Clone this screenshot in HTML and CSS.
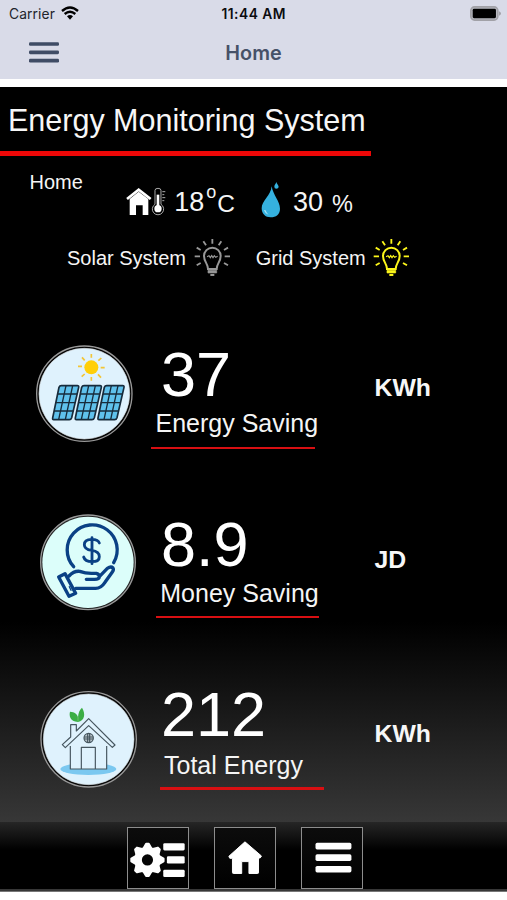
FILE: index.html
```html
<!DOCTYPE html>
<html lang="en">
<head>
<meta charset="utf-8">
<title>Home</title>
<link rel="stylesheet" href="styles.css">
</head>
<body>
<header class="top">
  <div class="status">
    <div class="carrier">
      <span>Carrier</span>
      <svg class="wifi" viewBox="0 0 54 42"><path d="M3 15Q27-6 51 15" fill="none" stroke="#000" stroke-width="7"/><path d="M11 24Q27 10 43 24" fill="none" stroke="#000" stroke-width="7"/><path d="M18 31Q27 23 36 31L27 41Z"/></svg>
    </div>
    <span class="time">11:44 AM</span>
    <svg class="battery" viewBox="0 0 92 44"><rect x="2.500" y="2.500" width="80" height="39" rx="11" fill="#b9bac2" stroke="#a1a1a7" stroke-width="5"/><rect x="8" y="8" width="69" height="28" rx="4"/><path d="M86 15Q92 18 92 22T86 29Z" fill="#a1a1a7"/></svg>
  </div>
  <div class="nav">
    <svg class="burger" viewBox="0 0 90 62"><g fill="#3f4c65"><rect width="90" height="11" rx="4"/><rect y="25" width="90" height="11" rx="4"/><rect y="50" width="90" height="11" rx="4"/></g></svg>
    <span class="nav-title">Home</span>
  </div>
</header>
<main class="screen">
  <h1 class="title">Energy Monitoring System</h1>
  <div class="title-rule"></div>
  <section class="climate">
    <span class="room">Home</span>
    <svg class="indoor" viewBox="377 290 120 88">
      <path d="M380 326L415 298L451 326" fill="none" stroke="#fff" stroke-width="8"/>
      <path d="M388 326L415 304L444 326V374H427V345H407V374H388Z" fill="#fff"/>
      <path d="M464 342V300Q464 294 473 294T482 300V342A17 17 0 1 1 464 342Z" fill="none" stroke="#aaa" stroke-width="3"/>
      <circle cx="473" cy="355" r="11" fill="#fff"/><path d="M473 355V313" stroke="#fff" stroke-width="8"/>
      <path d="M486 304H495M486 313H492M486 322H495M486 331H492" stroke="#aaa" stroke-width="3"/>
    </svg>
    <span class="reading temp">18</span><span class="degree">o</span><span class="celsius">C</span>
    <svg class="drop" viewBox="124 274 60 112"><path d="M156 290C160 316 181 335 181 357C181 374 169 383 153 383C137 383 126 373 126 356C126 334 153 319 156 290Z" fill="#35b1df"/><path d="M170 277C171 283 177 286 177 292Q176 297 170 297Q164 297 164 291C164 285 169 283 170 277Z" fill="#35b1df"/><path d="M133 361Q137 373 147 375Q141 370 137 361Z" fill="#a5e3f7"/></svg>
    <span class="reading hum">30</span><span class="percent">%</span>
  </section>
  <section class="sources">
    <span class="source solar">Solar System</span>
    <svg class="bulb off" viewBox="460 443 110 118"><use href="#bulb"/></svg>
    <span class="source grid">Grid System</span>
    <svg class="bulb on" viewBox="460 443 110 118">
      <g id="bulb" fill="none" stroke="currentColor" stroke-width="5.500">
        <path d="M502 536C502 520 490 515 490 497A25 25 0 0 1 540 497C540 515 528 520 528 536Z" stroke-width="6"/>
        <path d="M499 499L505 496L509 502L513 496L517 502L521 496L525 501L531 498" stroke-width="3.500"/>
        <path d="M502 540H528V548H502Z" fill="currentColor" stroke-width="2"/><path d="M509 554H521" stroke-width="6"/>
        <path d="M515 446V460M488 453L496 465M542 453L534 465M468 472L480 479M562 472L550 479M462 498H478M552 498H568M468 525L480 518M562 525L550 518"/>
      </g>
    </svg>
  </section>

  <section class="metric energy">
    <svg class="badge" viewBox="0 0 330 330">
      <circle cx="163" cy="161" r="143" fill="#050505" stroke="#999" stroke-width="4"/><circle cx="163" cy="161" r="136" fill="#dff2fd" stroke="#d6dce0" stroke-width="2"/>
      <circle cx="184" cy="82" r="21" fill="#ffcf08"/>
      <path d="M184 42V53M184 111V122M144 79H156M212 83H224M156 52L164 61M204 103L213 113M214 54L205 62M155 110L164 102" stroke="#f3c536" stroke-width="5"/>
      <defs><g id="panel"><path d="M94 137H142Q147 137 146 142L125 233Q123 239 118 239H71Q67 239 68 234L87 142Q89 137 94 137Z" fill="#5fc1ec" stroke="#172b3b" stroke-width="5"/><path d="M108 137L86 239M128 137L106 239M83 162H141M76 188H135M72 213H130" fill="none" stroke="#172b3b" stroke-width="4"/></g></defs>
      <use href="#panel"/><use href="#panel" x="68"/><use href="#panel" x="136"/>
    </svg>
    <div class="data"><div class="value">37</div><div class="label">Energy Saving</div><div class="rule"></div></div>
    <span class="unit">KWh</span>
  </section>

  <section class="metric money">
    <svg class="badge" viewBox="0 0 330 330">
      <circle cx="174" cy="163" r="142" fill="#222" stroke="#999" stroke-width="4"/><circle cx="174" cy="163" r="137" fill="#dcfefa"/>
      <g fill="none" stroke="#0a4185" stroke-width="10" stroke-linejoin="round" stroke-linecap="round">
        <path d="M131 176A75 75 0 1 1 251 164"/>
        <path d="M208 105Q205 94 185 94Q163 94 163 110Q163 124 185 127Q208 130 208 146Q208 161 186 161Q165 161 161 147M186 89V167" stroke-width="8.500"/>
        <path d="M86 207L105 197L137 256L117 265Z"/>
        <path d="M117 204Q132 188 149 190Q166 196 184 196H199Q209 199 208 207Q207 214 194 214H169M208 206L232 181Q243 174 249 180Q252 185 247 192L225 223Q213 241 197 241H137"/>
        <path d="M118 236L123 247" stroke-width="4"/>
      </g>
    </svg>
    <div class="data"><div class="value">8.9</div><div class="label">Money Saving</div><div class="rule"></div></div>
    <span class="unit">JD</span>
  </section>

  <section class="metric total">
    <svg class="badge" viewBox="0 0 330 330">
      <circle cx="176" cy="163" r="143" fill="#080808" stroke="#999" stroke-width="4"/><circle cx="176" cy="163" r="136" fill="#dff2fd" stroke="#cfd6da" stroke-width="2"/>
      <ellipse cx="175" cy="252" rx="84" ry="18" fill="#7bc8f0"/>
      <path d="M121 165L176 115L230 165V252H121Z" fill="#dff2fd"/>
      <g fill="none" stroke="#46565f" stroke-width="3.500" stroke-linejoin="round">
        <path d="M121 183V252H230V183M154 252V187H196V252"/>
        <path d="M97 179L122 156V119H139V138L176 101L255 180L247 187L176 122L106 188Z" fill="#dff2fd"/>
        <circle cx="176" cy="159" r="14" fill="#b8c5cb"/><path d="M173 145V173M179 145V173M162 156H190M162 162H190"/>
      </g>
      <path d="M144 111C119 109 117 91 120 80C134 81 142 87 144 97C145 83 149 74 156 68C167 86 165 106 144 111Z" fill="#3bae45"/><path d="M144 96V109" stroke="#83cf7c" stroke-width="2"/>
    </svg>
    <div class="data"><div class="value">212</div><div class="label">Total Energy</div><div class="rule"></div></div>
    <span class="unit">KWh</span>
  </section>

  <footer class="tabs">
    <button class="tab" aria-label="Settings"><svg viewBox="24 37 183 183">
      <g fill="#fff" stroke="#fff" stroke-width="6" stroke-linejoin="round"><defs><path id="tooth" d="M69 102L79 85H87L97 102Z"/></defs>
      <use href="#tooth"/><use href="#tooth" transform="rotate(45 83 134)"/><use href="#tooth" transform="rotate(90 83 134)"/><use href="#tooth" transform="rotate(135 83 134)"/><use href="#tooth" transform="rotate(180 83 134)"/><use href="#tooth" transform="rotate(225 83 134)"/><use href="#tooth" transform="rotate(270 83 134)"/><use href="#tooth" transform="rotate(315 83 134)"/></g>
      <circle cx="83" cy="134" r="28.500" fill="none" stroke="#fff" stroke-width="23"/>
      <g fill="#fff"><rect x="131" y="83" width="65" height="22" rx="4"/><rect x="142" y="123" width="54" height="22" rx="4"/><rect x="131" y="164" width="65" height="22" rx="4"/></g>
    </svg></button>
    <button class="tab" aria-label="Home"><svg viewBox="284 37 183 183"><path d="M375 79L425 122L421 128H416V173Q416 175 413 175H387V139H365V175H340Q337 175 337 172V129H329L326 123Z" fill="#fff" stroke="#fff" stroke-width="3" stroke-linejoin="round"/></svg></button>
    <button class="tab" aria-label="Menu"><svg viewBox="544 37 183 183"><g fill="#fff"><rect x="585" y="82" width="109" height="20" rx="5"/><rect x="585" y="117" width="109" height="20" rx="5"/><rect x="585" y="152" width="109" height="20" rx="5"/></g></svg></button>
  </footer>
</main>
</body>
</html>
```
FILE: styles.css
```css
* { box-sizing: border-box; }
body { margin: 0; background: #fff; width: 507px; height: 900px; overflow: hidden; font-family: "Liberation Sans", Arial, sans-serif; }
svg { display: block; flex: none; }
span { white-space: nowrap; }

.top { height: 79px; background: #d9dbe8; font-family: Inter, sans-serif; }
.status { height: 28px; display: grid; grid-template-columns: 1fr auto 1fr; align-items: center; padding: 0 6px 0 9px; font-size: 13.800px; color: #22242b; }
.carrier { display: flex; align-items: center; gap: 6px; margin-top: -1px; }
.carrier span { letter-spacing: 0.1px; }
.wifi { width: 18px; height: 14px; margin-top: -1px; }
.time { font-weight: 600; font-size: 13.8px; color: #0c0c10; letter-spacing: 0.5px; margin-left: -2.5px; }
.battery { width: 31px; height: 15px; justify-self: end; margin-top: -2px; }
.nav { height: 49px; display: grid; grid-template-columns: 1fr auto 1fr; align-items: center; padding: 0 29px; }
.burger { width: 30px; height: 21px; }
.nav-title { font-size: 19.800px; font-weight: 600; color: #465168; }

.screen { margin-top: 8px; height: 805px; padding-top: 15px; border-bottom: 1.5px solid #777; background: linear-gradient(#000 0, #000 535px, #373737 735px); }
.title { margin: 0; padding-left: 8px; font-size: 30.500px; line-height: 36px; font-weight: 400; color: #f7f7f7; }
.title-rule { width: 371px; height: 5px; margin-top: 12.5px; background: #ee0707; }

.climate { height: 64.5px; display: flex; align-items: flex-start; padding-left: 29.500px; color: #f5f5f5; }
.room { width: 96.200px; font-size: 20px; line-height: 24px; margin-top: 14.5px; }
.indoor { width: 40px; height: 29.300px; margin-top: 31.200px; }
.reading { font-size: 27px; line-height: 30px; margin-top: 31.800px; }
.temp { width: 33px; margin-left: 8.500px; }
.degree { width: 11px; font-size: 18px; line-height: 20px; margin-top: 26px; margin-left: -1px; }
.celsius { width: 44.300px; font-size: 24.500px; line-height: 28px; margin-top: 34.500px; }
.drop { width: 20px; height: 37.300px; margin-top: 25.800px; }
.hum { width: 39px; margin-left: 11.500px; }
.percent { font-size: 23.500px; line-height: 28px; margin-top: 34.500px; }

.sources { height: 120px; display: flex; align-items: flex-start; padding-left: 67px; color: #f5f5f5; }
.source { font-size: 20px; line-height: 24px; margin-top: 25.800px; }
.solar { width: 127px; }
.grid { width: 117.500px; margin-left: 25px; }
.bulb { width: 36.700px; height: 39.300px; margin-top: 17.700px; }
.off { color: #989898; }
.on { color: #fcf61a; }

.metric { display: flex; align-items: flex-start; padding-left: 30px; color: #fff; }
.badge { width: 110px; height: 110px; }
.data { width: 234.500px; padding-left: 10px; }
.value { font-size: 63px; line-height: 56px; padding-left: 11px; }
.label { font-size: 25px; line-height: 30px; color: #f5f5f5; }
.rule { width: 163.500px; height: 2.500px; background: #d80f12; }
.unit { font-size: 24.800px; line-height: 30px; font-weight: 700; color: #f7f7f7; }

.energy { height: 168px; }
.energy .data { padding-top: 5.500px; }
.energy .label { margin: 6.500px 0 8.500px 5.500px; }
.energy .rule { margin-left: 1px; }
.energy .unit { margin-top: 32.500px; }

.money { height: 177px; }
.money .data { padding-top: 8.200px; }
.money .label { margin: 5.800px 0 8px 10.300px; }
.money .rule { margin-left: 5.500px; }
.money .unit { margin-top: 37px; }

.total { height: 137px; }
.total .data { padding-top: 1.200px; }
.total .label { margin: 8.100px 0 6.700px 14px; }
.total .rule { margin-left: 10px; height: 3px; }
.total .unit { margin-top: 34.300px; }

.tabs { height: 66.5px; display: flex; gap: 24.500px; padding: 4.500px 0 0 127px; background: linear-gradient(#262626, #000 28px); }
.tab { width: 62.300px; height: 62.300px; padding: 0; border: 1px solid #8d8d8d; background: linear-gradient(#0c0c0c, #000); }
.tab svg { width: 100%; height: 100%; }
```
